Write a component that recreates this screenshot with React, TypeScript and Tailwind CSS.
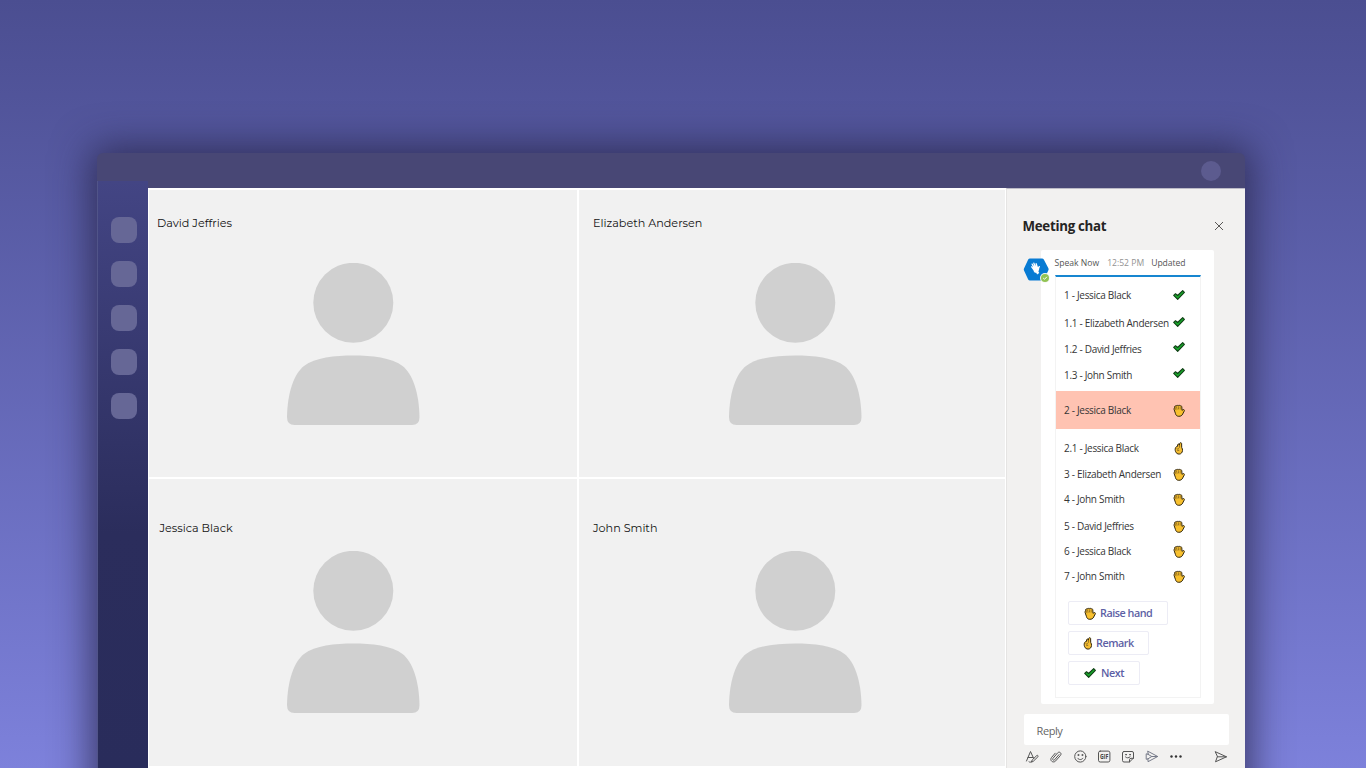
import type { ReactNode } from "react";

type IconName = "check" | "palm" | "remark";

type Entry = {
	label: string;
	icon: IconName;
	row: string;
	shift?: string;
};

const entries: Entry[] = [
	{ label: "1 - Jessica Black", icon: "check", row: "h-[27px]", shift: "pt-px" },
	{ label: "1.1 - Elizabeth Andersen", icon: "check", row: "h-[28px] pt-[2px]", shift: "pb-[3px]" },
	{ label: "1.2 - David Jeffries", icon: "check", row: "h-[25px]", shift: "pb-[3px]" },
	{ label: "1.3 - John Smith", icon: "check", row: "h-[27px]", shift: "pb-[4px]" },
	{ label: "2 - Jessica Black", icon: "palm", row: "mt-[3px] mb-[5px] h-[38px] bg-[#ffc3b2]", shift: "pt-px" },
	{ label: "2.1 - Jessica Black", icon: "remark", row: "h-[27px]", shift: "pt-px" },
	{ label: "3 - Elizabeth Andersen", icon: "palm", row: "h-[25px]", shift: "pt-px" },
	{ label: "4 - John Smith", icon: "palm", row: "h-[25px]", shift: "pt-px" },
	{ label: "5 - David Jeffries", icon: "palm", row: "h-[28px] pt-[2px]" },
	{ label: "6 - Jessica Black", icon: "palm", row: "h-[23px]", shift: "pt-px" },
	{ label: "7 - John Smith", icon: "palm", row: "h-[27px]", shift: "pt-px" },
];

function CheckIcon() {
	return (
		<svg width="12" height="12" viewBox="0 0 12 12">
			<path d="M.7 6.4 2.5 4.7 4.6 6.5 9.7 1.6 11.4 3.3 4.7 10.4Z" fill="#18a52a" stroke="#123f17" strokeWidth="1.1" strokeLinejoin="round" />
		</svg>
	);
}

function PalmIcon() {
	return (
		<svg width="12" height="13" viewBox="0 0 12 13">
			<path
				d="M2.5 9.7 1 5.2c-.3-1 .7-1.4 1.1-.9l-.5-1.4c-.1-1 1-1.3 1.5-.6.1-1.1 1.5-1.3 2-.4.4-1 1.8-.8 2 .1.7-.6 1.7 0 1.7.8l.2 3.6.8-.6c.8-.6 2 .1 1.6.9L9.7 10c-.8 1.7-2 2.3-3.9 2.3-1.8 0-2.9-.9-3.3-2.6Z"
				fill="#f8c02e"
				stroke="#33280f"
				strokeWidth="1"
				strokeLinejoin="round"
			/>
			<path d="m2.2 4.4.9 1.8M3.3 2.6l.9 3M5.2 2.2l.4 3.2M7.2 2.5v3" fill="none" stroke="#8a681f" strokeWidth=".8" />
		</svg>
	);
}

function RemarkIcon() {
	return (
		<svg width="12" height="13" viewBox="0 0 12 13">
			<path
				d="M2.6 9.7c-.7-1.7-.5-3.4.2-4.4.4-.6 1-.9 1.6-.8l.3-1.9c.2-.9 1.3-.9 1.4 0l.2.7.4-1.9c.2-1 1.9-.9 1.9.1l.1 4c.7.9.9 2 .8 3.1-.2 2-1.5 3.5-3.4 3.5-1.5 0-2.8-.8-3.5-2.4Z"
				fill="#f5bd31"
				stroke="#33280f"
				strokeWidth="1"
				strokeLinejoin="round"
			/>
			<path d="m3.7 6.1 1.1 1.4.9-1.3M6.5 3.4l-.1 2.4m-2.2 2.8 2-.2" fill="none" stroke="#72591f" strokeWidth=".7" />
		</svg>
	);
}

function StatusIcon({ name }: { name: IconName }) {
	if (name === "check") return <CheckIcon />;
	if (name === "remark") return <RemarkIcon />;
	return <PalmIcon />;
}

function Person({ name, label, avatar }: { name: string; label: string; avatar: string }) {
	return (
		<div className="bg-[#f1f1f1] flex flex-col items-start overflow-hidden">
			<div className={`h-5 text-[11.2px] leading-5 whitespace-nowrap text-[#111] font-[Montserrat,Inter,sans-serif] ${label}`}>{name}</div>
			<svg className={`shrink-0 ${avatar}`} width="133" height="163" viewBox="0 0 133 163" fill="#d0d0d0">
				<circle cx="66.3" cy="39.8" r="40" />
				<path d="M0 154C.5 129 7 111 17 103C28 94.5 48 92.5 66.3 92.5C84.5 92.5 104.5 94.5 115.5 103C125.500 111 132 129 132.5 154Q132.5 162 125 162H7.5Q0 162 0 154Z" />
			</svg>
		</div>
	);
}

function ActionButton({ icon, children, className }: { icon: IconName; children: ReactNode; className: string }) {
	return (
		<button className={`h-[24px] flex items-center rounded-[2px] border border-[#ececf5] bg-white text-[10.8px] tracking-[-0.48px] font-semibold whitespace-nowrap text-[#5d5fa5] ${className}`}>
			<StatusIcon name={icon} />
			{children}
		</button>
	);
}

function ComposeBar() {
	return (
		<svg className="mt-[4px] ml-[18px] block" width="204" height="16" viewBox="0 0 204 16" fill="none" stroke="#555" strokeWidth="1" strokeLinecap="round" strokeLinejoin="round">
			<path d="m1.5 12 4-9.5 3.2 7M3 8.5h4.8M6.5 12.8l.7-1.8 4.5-4.4c.8-.8 2 .4 1.2 1.2L8.5 12.1Zm-.3.1c-.8.5-1.5.4-2.2-.1" />
			<path d="m34 5.600-4.4 5.2c-.5.6-1.2.5-1.6.1-.5-.4-.5-1 0-1.6l4.6-5.4c.9-1 2.1-.9 2.8-.2.8.7.8 1.8 0 2.8l-4.7 5.4c-1.1 1.3-2.8 1.3-3.9.4-1.2-1-1.3-2.6-.2-3.9l3.6-4.2" />
			<circle cx="55.300" cy="7.5" r="5.6" />
			<path d="M52.6 9.2c1.5 1.9 3.9 1.9 5.4 0" />
			<circle cx="53.3" cy="6" r=".5" fill="#555" />
			<circle cx="57.3" cy="6" r=".5" fill="#555" />
			<rect x="73.5" y="2.1" width="11.4" height="10.9" rx="1.7" />
			<text x="75" y="9.9" fontSize="6.5" fontWeight="700" fill="#444" stroke="none" fontFamily="Open Sans, sans-serif" textLength="8.4" lengthAdjust="spacingAndGlyphs">GIF</text>
			<path d="M99 2.500h8q1.5 0 1.5 1.5v5l-4 4H99q-1.5 0-1.5-1.5V4q0-1.5 1.5-1.5Zm5.5 10.5v-2.2q0-1.5 1.5-1.5h2.500M100.500 8c1 1.1 3.2 1.3 4.6-.2" />
			<circle cx="101" cy="5.7" r=".4" fill="#555" />
			<circle cx="105" cy="5.7" r=".4" fill="#555" />
			<path d="m123 2.300 9.7 5.2-9.7 5.2V9.800l-1.8.5V4.800l1.8.5Zm0 3 3.8 2.2-3.8 2.3m3.800-2.300h5.700" stroke="#777b89" />
			<g fill="#333" stroke="none"><circle cx="146.500" cy="7.500" r="1.2" /><circle cx="151" cy="7.500" r="1.2" /><circle cx="155.500" cy="7.500" r="1.2" /></g>
			<path d="m190.500 2.800 11 5-11 5 1.8-5Zm1.800 5h9" />
		</svg>
	);
}

function MeetingChat() {
	return (
		<aside className="w-[239px] h-full flex flex-col border-l border-[#e5e4e3] border-t border-t-[#bcbbc7] bg-[#f2f1f0] font-['Open_Sans','Noto_Sans',sans-serif]">
			<div className="h-[61px] pt-[13px] pl-[15.5px] pr-[21px] flex items-center justify-between">
				<h2 className="text-[13.3px] leading-5 font-bold tracking-[-0.28px] text-[#252423]">Meeting chat</h2>
				<svg width="10" height="10" viewBox="0 0 10 10" fill="none" stroke="#484644" strokeWidth=".9"><path d="m1 1 8 8M9 1 1 9" /></svg>
			</div>
			<div className="h-[454px] flex pl-[34px] relative">
				<svg className="absolute left-[16px] top-[8px]" width="28" height="28" viewBox="0 0 28 28">
					<path d="M7 .5h12q1.2 0 1.8 1l4.6 8.7q.5 1 0 2L21 21.5q-.6 1-1.8 1H7q-1.2 0-1.8-1L1 12.5q-.5-1 0-2L5.2 1.5Q5.8.5 7 .5Z" fill="#087bd3" />
					<path d="M10.4 12.2 8.2 9.3c-.5-.8.4-1.3 1-.7l1 .9-1.6-3.1c-.4-.8.6-1.3 1.1-.5l1.7 2.5-1.2-3.1c-.2-.8.8-1.1 1.2-.3l1.4 2.9-.3-2.3c0-.8 1-.9 1.3 0l1.1 3.5 1-.9c.6-.5 1.3 0 1 .6-.9 1.8-.7 3.4-1.5 4.8l.9 1.5-2.2 1.3-.9-1.6c-1.3.2-2.1-.4-2.8-2.6Z" fill="white" />
					<circle cx="22" cy="20" r="5" fill="#f7f8f5" />
					<circle cx="22" cy="20" r="4" fill="#92c353" />
					<path d="m20.2 20 1.3 1.3 2.4-2.5" fill="none" stroke="white" />
				</svg>
				<div className="w-[173px] h-full rounded-[2px] bg-white pl-[13px]">
					<div className="h-[25px] pt-[2px] pl-[0.5px] flex items-center text-[8.6px] whitespace-nowrap text-[#555]">
						<span>Speak Now</span>
						<span className="ml-[8px] text-[#929292]">12:52 PM</span>
						<span className="ml-[7px] tracking-[-0.05px]">Updated</span>
					</div>
					<div className="ml-px h-[423px] w-[146px] border border-t-2 border-[#f3f3f3] border-t-[#1686d0] pt-[4px]">
						{entries.map((entry) => (
							<div key={entry.label} className={`flex items-center justify-between pl-[8px] pr-[15px] ${entry.row}`}>
								<span className="w-[108px] text-[10px] leading-4 tracking-[-0.3px] whitespace-nowrap text-[#353535]">{entry.label}</span>
								<span className={entry.shift}><StatusIcon name={entry.icon} /></span>
							</div>
						))}
						<div className="mt-[12px] ml-[12px] flex flex-col items-start gap-[6px]">
							<ActionButton icon="palm" className="w-[100px] pl-[15px] gap-[4px]">Raise hand</ActionButton>
							<ActionButton icon="remark" className="w-[81px] pl-[13px] gap-[2px]">Remark</ActionButton>
							<ActionButton icon="check" className="w-[72px] pl-[15px] gap-[5px]">Next</ActionButton>
						</div>
					</div>
				</div>
			</div>
			<div className="mt-[10px] ml-[17px] w-[205px] h-[31px] rounded-[2px] bg-white pl-[12.5px] pt-px text-[11px] tracking-[-0.4px] leading-[31px] text-[#656565]">Reply</div>
			<ComposeBar />
		</aside>
	);
}

export default function App() {
	return (
		<div className="h-screen min-w-[1366px] overflow-hidden bg-linear-to-b from-[#4b4e91] to-[#7d81db] pt-[153px] pl-[97px]">
			<div className="w-[1148px] h-[660px] rounded-t-[6px] bg-[#484775] shadow-[0_0_38px_6px_rgba(36,34,67,0.75)]">
				<header className="h-[35px] flex items-center justify-end pr-[24px]">
					<div className="size-5 rounded-full bg-[#5c5b8f]" />
				</header>
				<div className="h-[580px] flex">
					<nav className="-mt-[7px] h-[587px] w-[51px] shrink-0 border-l border-[#515489] bg-linear-to-b from-[#434584] via-[#2b2d5c] via-60% to-[#292c5b] pt-[36px] pl-[13px] flex flex-col gap-[18px]">
						{[1, 2, 3, 4, 5].map((item) => (
							<div key={item} className="size-[26px] shrink-0 rounded-[8px] bg-[#666796]" />
						))}
					</nav>
					<main className="w-[858px] shrink-0 h-full grid grid-cols-[428px_426px] grid-rows-[287px_287px] gap-[2px] bg-white pt-[2px] pl-px">
						<Person name="David Jeffries" label="mt-[23px] ml-[8px]" avatar="mt-[30px] ml-[138px]" />
						<Person name="Elizabeth Andersen" label="mt-[23px] ml-[14px]" avatar="mt-[30px] ml-[150px]" />
						<Person name="Jessica Black" label="mt-[39px] ml-[10.5px]" avatar="mt-[13px] ml-[138px]" />
						<Person name="John Smith" label="mt-[39px] ml-[14px]" avatar="mt-[13px] ml-[150px]" />
					</main>
					<MeetingChat />
				</div>
			</div>
		</div>
	);
}
